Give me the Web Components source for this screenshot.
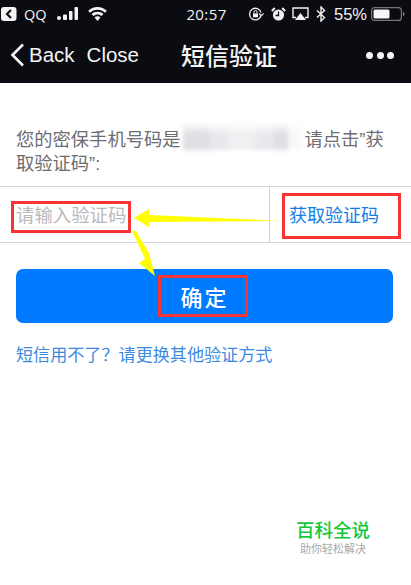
<!DOCTYPE html>
<html lang="zh">
<head>
<meta charset="utf-8">
<title>短信验证</title>
<style>
html, body { margin: 0; padding: 0; background: #fff; }
body { width: 411px; height: 585px; overflow: hidden; font-family: "Liberation Sans", "Noto Sans CJK SC", sans-serif; }
</style>
</head>
<body>
<sms-page></sms-page>

<script>
class StatusBar extends HTMLElement {
    constructor() {
        super();
        this.shadowDOM = this.attachShadow({mode: "open"});
    }

    connectedCallback() {
        this.shadowDOM.innerHTML = `
        <style>
        :host { display: grid; grid-template-columns: 1fr auto 1fr; align-items: center; height: 28px; color: #f2f2f2; font: 15px "Open Sans", "Liberation Sans", sans-serif; }
        .left, .right { display: flex; align-items: center; }
        .left { padding-left: 1px; }
        .qq { margin-left: 7px; font-size: 14.500px; }
        .signal { margin-left: 10px; }
        .wifi { margin-left: 9px; }
        .time { font-size: 15px; letter-spacing: .4px; margin-left: 2px; }
        .right { justify-content: flex-end; padding-right: 6px; }
        .right svg { flex: none; }
        .pct { font: 16.500px "Liberation Sans", sans-serif; margin: 0 4px 0 8px; }
        </style>
        <div class="left">
            <svg width="16" height="16" viewBox="0 0 16 16"><rect x="0" y="1" width="15.500" height="14" rx="3" fill="#f4f4f4"/><path d="M10 4 6 8l4 4" fill="none" stroke="#111" stroke-width="2.200"/></svg>
            <span class="qq">QQ</span>
            <svg class="signal" width="22" height="14" viewBox="0 0 22 14" fill="#f4f4f4"><circle cx="2" cy="11" r="2"/><rect x="6" y="7.500" width="4" height="5.500" rx="1"/><rect x="12" y="4" width="3.500" height="9" rx="1"/><rect x="17.500" y="0" width="3.500" height="13" rx="1"/></svg>
            <svg class="wifi" width="19" height="14" viewBox="0 0 19 14" fill="#f4f4f4"><path d="M9.500 0C5.800 0 2.600 1.400.2 3.700l1.800 2C4 3.800 6.600 2.700 9.500 2.700s5.500 1.100 7.500 3l1.800-2C16.400 1.400 13.200 0 9.500 0Z"/><path d="M9.500 4.700c-2.300 0-4.300.9-5.900 2.300l1.800 2c1.100-1 2.500-1.600 4.100-1.600s3 .6 4.100 1.600l1.800-2c-1.600-1.400-3.600-2.300-5.900-2.300Z"/><path d="M9.500 9.300c-1.200 0-2.200.4-3 1.200l3 3.400 3-3.400c-.8-.8-1.800-1.200-3-1.200Z"/></svg>
        </div>
        <div class="time">20:57</div>
        <div class="right">
            <svg width="16" height="15" viewBox="0 0 16 15" fill="none" stroke="#f2f2f2" stroke-width="1.300"><path d="M12.900 9A5.800 5.800 0 1 1 13 5.500"/><path d="m11 6.500 2.200 2.200 2.300-2.200" stroke-width="1.200"/><rect x="5" y="6.500" width="5" height="3.800" fill="#f2f2f2" stroke="none"/><path d="M6 6.500V5a1.500 1.500 0 0 1 3 0v1.500" stroke-width="1"/></svg>
            <svg style="margin-left:7px" width="15" height="15" viewBox="0 0 15 15"><circle cx="7.500" cy="8" r="5.600" fill="#f2f2f2"/><path d="M7.500 4.500V8.500H4.500" fill="none" stroke="#111" stroke-width="1.300"/><path d="M.8 4 3.800 1M14.200 4l-3-3" stroke="#f2f2f2" stroke-width="2"/></svg>
            <svg style="margin-left:6px" width="17" height="14" viewBox="0 0 17 14"><path d="M4 10.500H1V1h15v9.500h-3" fill="none" stroke="#f2f2f2" stroke-width="1.400"/><path d="M8.500 6 14 13H3Z" fill="#f2f2f2"/></svg>
            <svg style="margin-left:7px" width="10" height="16" viewBox="0 0 10 16" fill="none" stroke="#f2f2f2" stroke-width="1.400"><path d="M1 4.500 8.500 11.500 5 15V1l3.500 3.500L1 11.500"/></svg>
            <span class="pct">55%</span>
            <svg width="34" height="16" viewBox="0 0 34 16"><rect x=".6" y="1.600" width="29.800" height="12.800" rx="3" fill="none" stroke="#77767c" stroke-width="1.200"/><rect x="2.500" y="3.500" width="16" height="9" rx="1.500" fill="#f6f6f6"/><path d="M32 6c1 .3 1.500 1 1.500 2s-.5 1.700-1.500 2Z" fill="#88878c"/></svg>
        </div>
        `;
    }
}

class NavBar extends HTMLElement {
    constructor() {
        super();
        this.shadowDOM = this.attachShadow({mode: "open"});
    }

    connectedCallback() {
        this.shadowDOM.innerHTML = `
        <style>
        :host { display: flex; align-items: center; height: 54px; padding-bottom: 1px; color: #f4f4f4; }
        .left { display: flex; align-items: center; width: 181px; box-sizing: border-box; padding-left: 10px; font: 20.500px "Liberation Sans", sans-serif; }
        .left svg { margin-right: 5px; }
        .close { margin-left: 12px; }
        .title { font: 500 24px "Noto Sans CJK SC", sans-serif; margin-top: -1px; }
        .more { flex: 1; display: flex; justify-content: flex-end; gap: 3.500px; padding-right: 17px; }
        .more i { width: 7px; height: 7px; border-radius: 50%; background: #f4f4f4; }
        </style>
        <div class="left">
            <svg width="14" height="24" viewBox="0 0 14 24" fill="none" stroke="#f4f4f4" stroke-width="2.600"><path d="M13 1.500 2.500 12 13 22.500"/></svg>
            <span>Back</span><span class="close">Close</span>
        </div>
        <div class="title"><slot></slot></div>
        <div class="more"><i></i><i></i><i></i></div>
        `;
    }
}

class CodeRow extends HTMLElement {
    constructor() {
        super();
        this.shadowDOM = this.attachShadow({mode: "open"});
    }

    connectedCallback() {
        this.shadowDOM.innerHTML = `
        <style>
        :host { display: flex; height: 55px; border-top: 1px solid #d3d3dd; border-bottom: 1px solid #d3d3dd; font: 18.400px "Liberation Sans", "Noto Sans CJK SC", sans-serif; }
        .input { width: 270px; box-sizing: border-box; padding: 0 0 2px 16px; display: flex; align-items: center; color: #b9b9bd; border-right: 1px solid #d3d3dd; }
        .get { flex: 1; padding: 0 0 2px 19px; display: flex; align-items: center; color: #127ee8; font-size: 18px; }
        </style>
        <div class="input">请输入验证码</div>
        <div class="get">获取验证码</div>
        `;
    }
}

class SmsPage extends HTMLElement {
    constructor() {
        super();
        this.shadowDOM = this.attachShadow({mode: "open"});
    }

    connectedCallback() {
        this.shadowDOM.innerHTML = `
        <style>
        :host { display: block; position: relative; width: 411px; height: 585px; background: #fff; font-family: "Liberation Sans", "Noto Sans CJK SC", sans-serif; }
        header { background: #0b0b12; height: 83px; }
        .hint { padding: 45px 16px 0; height: 58px; font-size: 18.300px; line-height: 24px; color: #6d6d72; }
        .hint .line { display: flex; }
        .hint .gap { width: 124px; }
        .blur { position: absolute; left: 183px; top: 123px; width: 118px; height: 27px; background: linear-gradient(180deg, #fff, rgba(255,255,255,0) 40%), linear-gradient(90deg, #dfdfe3 0 23%, #e9e9ed 23% 38%, #f0f0f2 38% 62%, #e9e9ed 62% 77%, #dfdfe5 77% 89%, #f8f8f8 89%); filter: blur(2px); }
        .confirm { display: flex; align-items: center; justify-content: center; margin: 26px 18px 0 16px; height: 54px; border-radius: 7px; background: #007aff; color: #fff; font-size: 22px; font-weight: 500; letter-spacing: 2px; }
        .other { margin: 21px 16px 0; font-size: 17.100px; line-height: 24px; color: #3d8ae0; }
        .brand { position: absolute; left: 296px; top: 519px; width: 74px; text-align: center; color: #13c93b; font-size: 18.500px; font-weight: 500; line-height: 24px; white-space: nowrap; }
        .brand small { display: block; font-size: 11px; line-height: 13px; color: #a8a8a8; font-weight: 400; }
        .mark { position: absolute; box-sizing: border-box; border: 3px solid #f93434; }
        svg.arrows { position: absolute; left: 0; top: 0; }
        </style>
        <header>
            <status-bar></status-bar>
            <nav-bar>短信验证</nav-bar>
        </header>
        <div class="blur"></div>
        <div class="hint">
            <div class="line"><span>您的密保手机号码是</span><span class="gap"></span><span>请点击”获</span></div>
            <div class="line">取验证码”:</div>
        </div>
        <code-row></code-row>
        <div class="confirm">确定</div>
        <div class="other">短信用不了？请更换其他验证方式</div>
        <div class="brand">百科全说<small>助你轻松解决</small></div>

        <div class="mark" style="left:11px;top:201px;width:120px;height:32px"></div>
        <div class="mark" style="left:282px;top:193px;width:119px;height:46px"></div>
        <div class="mark" style="left:158px;top:275px;width:90px;height:42px"></div>
        <svg class="arrows" width="411" height="585" viewBox="0 0 411 585" fill="#ffff00">
            <path d="M134 218 149 209V215L282 221 149 222V227Z"/>
            <path d="M132 231 136 231 149 253 155 276 139 263 145 259Z"/>
        </svg>
        `;
    }
}

customElements.define("status-bar", StatusBar);
customElements.define("nav-bar", NavBar);
customElements.define("code-row", CodeRow);
customElements.define("sms-page", SmsPage);
</script>
</body>
</html>
